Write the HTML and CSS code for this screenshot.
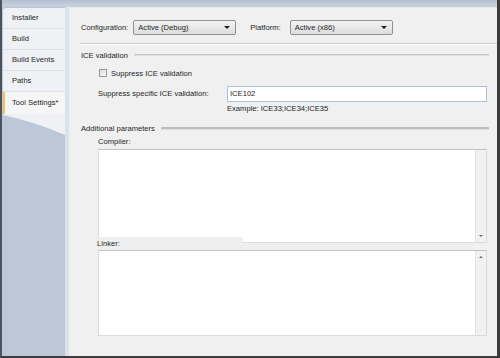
FILE: index.html
```html
<!DOCTYPE html>
<html lang="en">
<head>
    <meta charset="UTF-8">
    <title>Tool Settings</title>
    <link rel="stylesheet" href="styles.css">
</head>
<body>
    <div class="window">
        <nav class="tabs">
            <div class="tab">Installer</div>
            <div class="tab">Build</div>
            <div class="tab">Build Events</div>
            <div class="tab">Paths</div>
            <div class="tab active">Tool Settings*</div>
            <svg class="tab-tail" width="62" height="22" viewBox="0 0 62 22">
                <path d="M0 0 H62 V21 Q32 8 0 1 Z" fill="#eff1f4"/>
            </svg>
        </nav>

        <main class="panel">
            <div class="config-row">
                <label>Configuration:</label>
                <div class="select">Active (Debug)<i class="arrow"></i></div>
                <label class="platform-label">Platform:</label>
                <div class="select">Active (x86)<i class="arrow"></i></div>
            </div>

            <div class="separator"></div>

            <div class="group-title">
                <span>ICE validation</span>
                <i class="rule"></i>
            </div>
            <div class="check-row">
                <span class="checkbox"></span>
                <span>Suppress ICE validation</span>
            </div>
            <div class="field-row">
                <label class="field-label">Suppress specific ICE validation:</label>
                <div class="field">
                    <div class="textbox">ICE102</div>
                    <div class="hint">Example: ICE33;ICE34;ICE35</div>
                </div>
            </div>

            <div class="group-title params-title">
                <span>Additional parameters</span>
                <i class="rule thick"></i>
            </div>
            <div class="params">
                <div class="sub-label">Compiler:</div>
                <div class="textarea compiler">
                    <div class="scrollbar"><i class="down"></i></div>
                </div>
                <div class="sub-label linker-label">Linker:</div>
                <div class="textarea linker">
                    <div class="scrollbar"><i class="up"></i></div>
                </div>
            </div>
        </main>
    </div>
</body>
</html>
```

FILE: styles.css
```css
body, html {
    margin: 0;
    padding: 0;
    width: 500px;
    height: 358px;
    overflow: hidden;
}

body {
    font-family: "Liberation Sans", Arial, sans-serif;
    font-size: 7.6px;
    color: #1e1e1e;
    background-color: #bdc9d9;
}

.window {
    display: flex;
    box-sizing: border-box;
    width: 500px;
    height: 358px;
    padding-top: 7px;
    border-left: 2px solid #4d535c;
    border-right: 3px solid #3c3c3c;
    border-bottom: 2px solid #3c3c3c;
    background: linear-gradient(#b3bfcf, #c7d1de 6px, #bdc9d9 7px);
}

/* left tab strip */
.tabs {
    width: 62px;
    padding-left: 1px;
    padding-top: 1px;
    display: flex;
    flex-direction: column;
    background-color: #bcc8d8;
}

.tab {
    height: 20px;
    line-height: 20px;
    padding-left: 9px;
    background-color: #eff1f4;
    border-bottom: 1px solid #dfe3e9;
    white-space: nowrap;
}

.tab:first-child {
    border-top-left-radius: 3px;
}

.tab.active {
    height: 22px;
    line-height: 22px;
    padding-left: 7px;
    border-left: 2px solid #f3c651;
    border-bottom: none;
    background-color: #f6f6f7;
}

.tab-tail {
    display: block;
}

/* right panel */
.panel {
    flex: 1;
    background-color: #f0f0f0;
    border-left: 4px solid #dce2ea;
    border-top: 1px solid #e4e9f0;
}

.config-row {
    display: flex;
    align-items: center;
    padding: 12px 0 0 12px;
    height: 15px;
}

.config-row label {
    margin-right: 5px;
}

.config-row .platform-label {
    margin-left: 14px;
    margin-right: 9px;
}

.select {
    position: relative;
    box-sizing: border-box;
    width: 103px;
    height: 15px;
    line-height: 13px;
    padding-left: 4px;
    border: 1px solid #8f9192;
    border-radius: 2px;
    background: linear-gradient(#f4f4f4, #e8e8e8 50%, #dcdcdc);
}

.arrow {
    position: absolute;
    right: 5px;
    top: 5px;
    border-left: 3px solid transparent;
    border-right: 3px solid transparent;
    border-top: 3px solid #1e1e1e;
}

.separator {
    margin: 8px 0 0 11px;
    height: 1px;
    background-color: #c9c9c9;
    border-bottom: 1px solid #ffffff;
}

.group-title {
    display: flex;
    align-items: center;
    margin: 5px 8px 0 12px;
    height: 10px;
}

.rule {
    flex: 1;
    margin-left: 6px;
    height: 1px;
    background-color: #c6c6c6;
    border-bottom: 1px solid #dedede;
    border-radius: 1px;
}

.rule.thick {
    height: 2px;
    background-color: #bdbdbd;
}

.check-row {
    display: flex;
    align-items: center;
    margin: 8px 0 0 30px;
    height: 10px;
}

.checkbox {
    box-sizing: border-box;
    width: 8px;
    height: 8px;
    margin-right: 4px;
    border: 1px solid #9a9a9a;
    background: linear-gradient(135deg, #dcdcdc, #f8f8f8);
}

.field-row {
    display: flex;
    margin: 8px 10px 0 29px;
}

.field-label {
    width: 129px;
    line-height: 16px;
}

.field {
    flex: 1;
}

.textbox {
    box-sizing: border-box;
    height: 16px;
    line-height: 14px;
    padding-left: 2px;
    border: 1px solid #aebfd3;
    background-color: #ffffff;
}

.hint {
    margin-top: 2px;
    line-height: 10px;
}

.params-title {
    margin-top: 9px;
}

.params {
    margin: 4px 10px 0 29px;
}

.sub-label {
    line-height: 10px;
    height: 12px;
}

.textarea {
    position: relative;
    box-sizing: border-box;
    background-color: #ffffff;
    border: 1px solid #dcdcdc;
    border-top-color: #c2c2c2;
}

.textarea.compiler {
    height: 94px;
}

.linker-label {
    position: relative;
    width: 146px;
    height: 12px;
    line-height: 14px;
    margin-top: -6px;
    margin-left: -1px;
    background-color: #efefef;
}

.textarea.linker {
    height: 86px;
    margin-top: 1px;
}

.scrollbar {
    position: absolute;
    top: 0;
    right: 0;
    bottom: 0;
    width: 10px;
    background-color: #f1f1f1;
    border-left: 1px solid #e2e2e2;
}

.scrollbar .down {
    position: absolute;
    left: 3px;
    bottom: 5px;
    border-left: 2px solid transparent;
    border-right: 2px solid transparent;
    border-top: 2px solid #6d6d6d;
}

.scrollbar .up {
    position: absolute;
    left: 3px;
    top: 5px;
    border-left: 2px solid transparent;
    border-right: 2px solid transparent;
    border-bottom: 2px solid #6d6d6d;
}
```
